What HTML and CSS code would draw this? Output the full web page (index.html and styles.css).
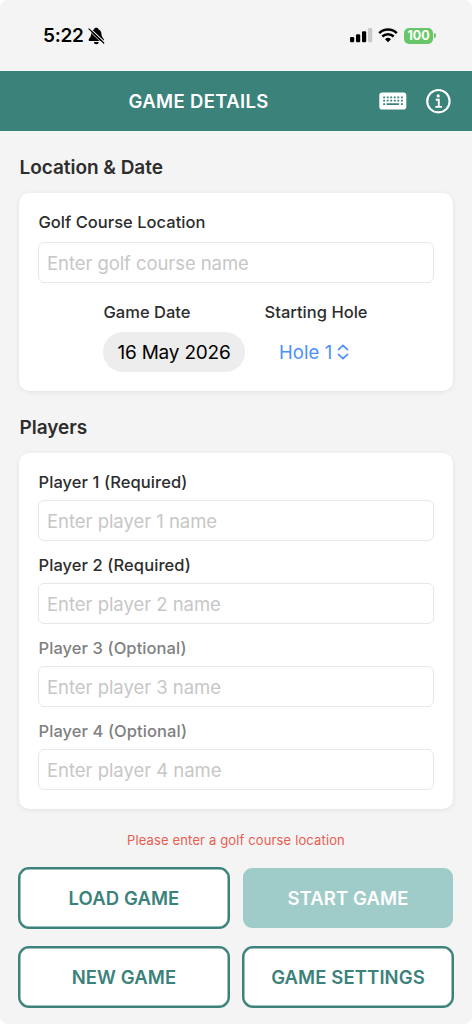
FILE: index.html
```html
<!DOCTYPE html>
<html lang="en">
<head>
<meta charset="utf-8">
<title>Game Details</title>
<link rel="stylesheet" href="styles.css">
</head>
<body>
<div class="screen">
  <div class="status">
    <span class="clock">5:22</span>
    <svg class="bell" width="17" height="18" viewBox="0 0 17 18">
      <path d="M8.300 .8c-1.200 0-2 .6-2.200 1.400C4 3.200 3.200 4.900 3.100 7.200c-.1 2-.7 2.900-1.700 4-1.200 1.300-1 2.900.8 2.900h12.200c1.800 0 2-1.600.8-2.900-1-1.100-1.600-2-1.700-4-.1-2.300-.9-4-3-5C10.300 1.400 9.500 .8 8.300 .8z"/>
      <path d="M5.900 15h4.800a2.400 2.200 0 0 1-4.800 0z"/>
      <path d="M2 1.400 16.400 15" stroke="#f4f4f4" stroke-width="1.100"/>
      <path d="M.9 1.900 15.700 16" stroke="#000" stroke-width="1.200" stroke-linecap="round"/>
      <path d="M0 2.700 14.700 16.700" stroke="#f4f4f4" stroke-width=".8"/>
    </svg>
    <svg class="signal" width="23" height="15" viewBox="0 0 23 15">
      <rect x="0" y="9" width="4.200" height="5.200" rx="1.200"/>
      <rect x="6" y="6.300" width="4.200" height="7.900" rx="1.200"/>
      <rect x="12" y="3.300" width="4.200" height="10.900" rx="1.200"/>
      <rect x="18" y="0" width="4.200" height="14.200" rx="1.200" fill="#c9c9c9"/>
    </svg>
    <svg class="wifi" width="20" height="15" viewBox="0 0 20 15" fill="none" stroke="#000" stroke-width="2.500">
      <path d="M1.200 5.100a12.600 12.600 0 0 1 17.600 0"/>
      <path d="M4.300 8.500a8.200 8.200 0 0 1 11.400 0"/>
      <path d="M10 14.200 7 11.200a4.300 4.300 0 0 1 6 0z" fill="#000" stroke="none"/>
    </svg>
    <span class="battery">100</span>
    <span class="nub"></span>
  </div>
  <header class="bar">
    <h1>GAME DETAILS</h1>
    <svg class="keys" width="28" height="18" viewBox="0 0 28 18">
      <rect x=".3" y=".5" width="27" height="17" rx="2.800" fill="#fff"/>
      <path d="M4.200 5.300h20M4.200 8.700h20" stroke="#3b827a" stroke-width="1.800" stroke-dasharray="1.900 1.640"/>
      <path d="M4.200 12.200h1.900M7.600 12.200h12.500M21.900 12.200h1.900" stroke="#3b827a" stroke-width="1.800"/>
    </svg>
    <svg class="info" width="26" height="26" viewBox="0 0 26 26" fill="none" stroke="#fff">
      <circle cx="13.400" cy="13.200" r="11.200" stroke-width="2.100"/>
      <circle cx="13.200" cy="7.900" r="1.600" fill="#fff" stroke="none"/>
      <path d="M10.800 11.800h3v6.800M10.300 18.900h6.700" stroke-width="1.900"/>
    </svg>
  </header>
  <main>
    <h2>Location &amp; Date</h2>
    <section class="card course">
      <div class="label">Golf Course Location</div>
      <div class="field">Enter golf course name</div>
      <div class="pickers">
        <div class="picker">
          <div class="label">Game Date</div>
          <div class="date">16 May 2026</div>
        </div>
        <div class="picker">
          <div class="label">Starting Hole</div>
          <div class="hole"><span>Hole 1</span>
            <svg width="12" height="16" viewBox="0 0 12 16" fill="none" stroke="#4a90f7" stroke-width="1.700" stroke-linecap="round" stroke-linejoin="round"><path d="M1.500 5.600 6 1.400l4.500 4.200M1.500 10.400 6 14.600l4.500-4.200"/></svg>
          </div>
        </div>
      </div>
    </section>
    <h2>Players</h2>
    <section class="card players">
      <div class="label">Player 1 (Required)</div>
      <div class="field">Enter player 1 name</div>
      <div class="label">Player 2 (Required)</div>
      <div class="field">Enter player 2 name</div>
      <div class="label optional">Player 3 (Optional)</div>
      <div class="field">Enter player 3 name</div>
      <div class="label optional">Player 4 (Optional)</div>
      <div class="field">Enter player 4 name</div>
    </section>
    <p class="error">Please enter a golf course location</p>
    <div class="actions">
      <div class="button">LOAD GAME</div>
      <div class="button disabled">START GAME</div>
      <div class="button">NEW GAME</div>
      <div class="button">GAME SETTINGS</div>
    </div>
  </main>
</div>
</body>
</html>
```
FILE: styles.css
```css
* { box-sizing: border-box; }
body { margin: 0; background: #fff; font-family: Inter, sans-serif; color: #2d2d2d; }
svg { display: block; flex: none; }
h1, h2, p { margin: 0; }
.screen { width: 472px; height: 1024px; background: #f4f4f4; border-radius: 8px; overflow: hidden; }
.status { height: 71px; display: flex; align-items: center; padding: 0 36px 0 43px; }
.clock { font-size: 19px; font-weight: 600; color: #000; letter-spacing: -0.3px; width: 45px; white-space: nowrap; }
.signal { margin-left: auto; margin-right: -1px; }
.wifi { margin-left: 6px; }
.battery { margin-left: 6px; width: 29px; height: 16px; border-radius: 5px; background: #67c768; color: #fff; font-size: 12.5px; line-height: 16px; font-weight: 700; text-align: center; }
.nub { width: 2px; height: 5px; margin-left: 1px; border-radius: 0 2px 2px 0; background: #67c768; }
.bar { height: 60px; background: #3b827a; display: flex; align-items: center; padding: 0 21px 0 128.500px; }
h1 { font-size: 18.500px; font-weight: 600; color: #fff; white-space: nowrap; letter-spacing: 0.350px; }
.keys { margin-left: auto; }
.info { margin-left: 18px; }
main { padding: 0 19px; }
h2 { font-size: 19px; line-height: 24px; font-weight: 600; padding: 25px 0 13px 0.500px; letter-spacing: -0.030px; }
.card { background: #fff; border-radius: 10px; padding: 19px; box-shadow: 0 1px 5px rgba(0,0,0,.08); }
.course { height: 198px; }
.label { font-size: 16.500px; line-height: 20px; font-weight: 500; white-space: nowrap; padding-left: 0.500px; letter-spacing: 0.020px; }
.optional { color: #808080; }
.field { height: 41px; border: 1px solid #e7e7e7; border-radius: 6px; padding: 0 8px; line-height: 41px; font-size: 18.500px; color: #c7c7c7; white-space: nowrap; }
.course .field { margin-top: 10px; letter-spacing: -0.080px; }
.players .field { margin: 7px 0 13px; letter-spacing: -0.040px; }
.pickers { display: flex; margin: 19px 0 0 65px; gap: 19px; }
.date { width: 142px; height: 40px; border-radius: 20px; background: #ededed; color: #000; font-size: 19px; line-height: 41px; text-align: center; margin-top: 10px; letter-spacing: -0.2px; }
.hole { display: flex; align-items: center; gap: 5px; height: 40px; margin: 10px 0 0 15px; color: #4a90f7; font-size: 18.500px; letter-spacing: 0.100px; }
.players { height: 356px; padding-top: 18px; }
.players .label { line-height: 22px; letter-spacing: 0.080px; }
.error { font-size: 13px; line-height: 18px; color: #e85d50; text-align: center; margin: 22px 0 18px; letter-spacing: 0.140px; }
.actions { display: grid; grid-template-columns: 212px 212px; gap: 17px 12px; margin: 0 -1px; }
.button { height: 62px; border: 2px solid #3b827a; box-shadow: inset 0 0 0 0.500px #3b827a; border-radius: 11px; background: #fff; color: #3b827a; font-size: 18.500px; font-weight: 600; letter-spacing: 0.100px; display: flex; align-items: center; justify-content: center; white-space: nowrap; }
.disabled { border: 0; box-shadow: none; margin: 1px; height: 60px; background: #9fccc8; color: #fff; border-radius: 9px; }
```
